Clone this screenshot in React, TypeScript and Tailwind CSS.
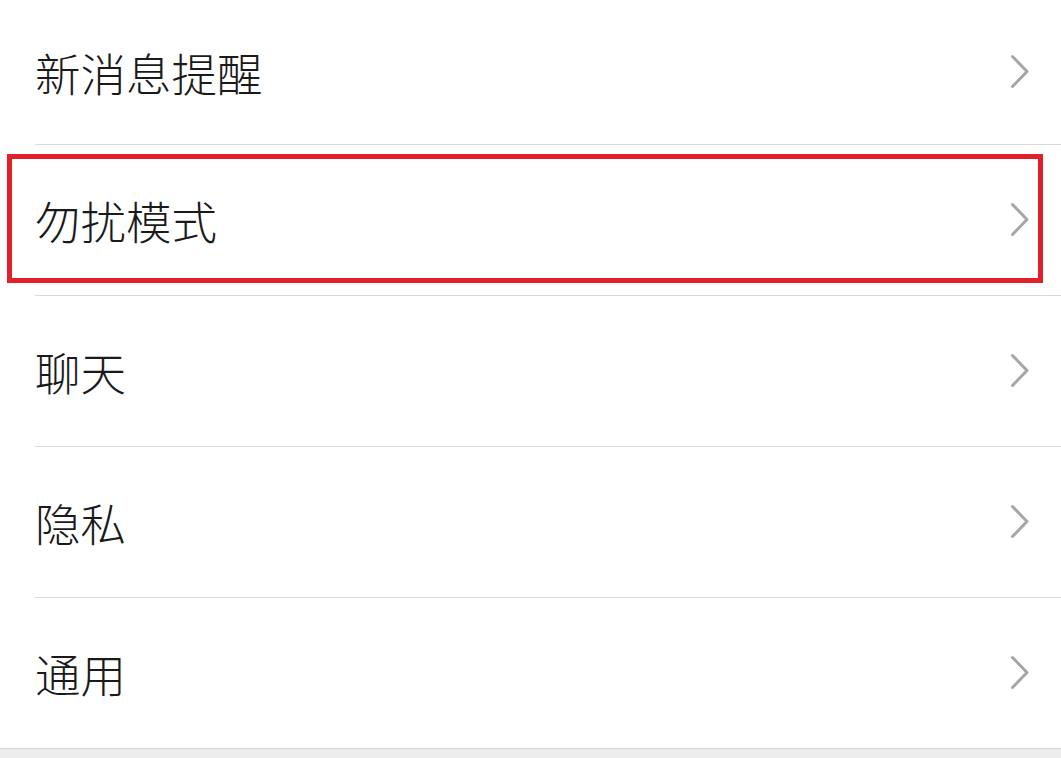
import React from "react";

const items = ["新消息提醒", "勿扰模式", "聊天", "隐私", "通用"];

function Chevron() {
  return (
    <svg width="20" height="36" viewBox="0 0 20 36" className="shrink-0">
      <polyline
        points="2.5,2.5 17,17.5 2.5,32.5"
        fill="none"
        stroke="#a6a6a6"
        strokeWidth="3"
        strokeLinecap="round"
        strokeLinejoin="round"
      />
    </svg>
  );
}

export default function App() {
  return (
    <div
      className="relative w-[1061px] h-[758px] overflow-hidden bg-white"
      style={{ fontFamily: '"Noto Sans CJK SC", "Noto Sans", sans-serif' }}
    >
      <div className="flex flex-col">
        {items.map((t, i) => (
          <div key={t} className="pl-[35px]">
            <div
              className={`flex items-center justify-between pr-[31px] ${
                i === 0 ? "h-[145px]" : i < items.length - 1 ? "h-[151px]" : "h-[150px]"
              } ${i < items.length - 1 ? "border-b border-[#d9d9d9]" : ""}`}
            >
              <span className="text-[45.5px] leading-none font-light text-[#1a1a1a] pt-[1px]">{t}</span>
              <Chevron />
            </div>
          </div>
        ))}
        <div className="h-[12px] border-t border-[#d6d6d6] bg-[#ededed]" />
      </div>
      <div className="absolute left-[7px] top-[154px] w-[1036px] h-[129px] border-[5px] border-[#e2202b]" />
    </div>
  );
}
